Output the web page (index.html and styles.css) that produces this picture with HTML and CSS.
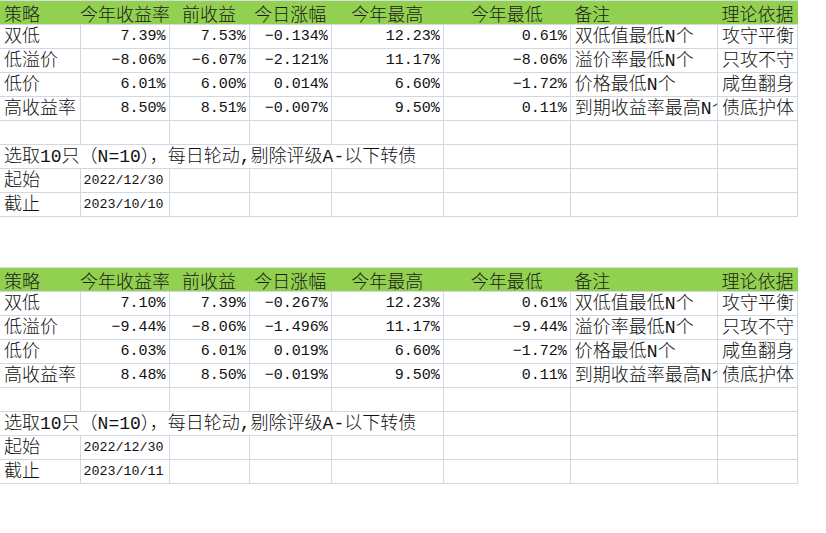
FILE: index.html
```html
<!DOCTYPE html>
<html lang="zh">
<head>
<meta charset="utf-8">
<title>策略</title>
<link rel="stylesheet" href="styles.css">
</head>
<body>
<div class="page">
<table class="sheet">
<colgroup>
<col class="c1"><col class="c2"><col class="c3"><col class="c4"><col class="c5"><col class="c6"><col class="c7"><col class="c8">
</colgroup>
<tr class="head">
<th class="l">策略</th><th>今年收益率</th><th>前收益</th><th>今日涨幅</th><th>今年最高</th><th>今年最低</th><th class="l">备注</th><th class="l">理论依据</th>
</tr>
<tr><td class="txt">双低</td><td class="num">7.39%</td><td class="num">7.53%</td><td class="num">−0.134%</td><td class="num">12.23%</td><td class="num">0.61%</td><td class="txt">双低值最低N个</td><td class="txt">攻守平衡</td></tr>
<tr><td class="txt">低溢价</td><td class="num">−8.06%</td><td class="num">−6.07%</td><td class="num">−2.121%</td><td class="num">11.17%</td><td class="num">−8.06%</td><td class="txt">溢价率最低N个</td><td class="txt">只攻不守</td></tr>
<tr><td class="txt">低价</td><td class="num">6.01%</td><td class="num">6.00%</td><td class="num">0.014%</td><td class="num">6.60%</td><td class="num">−1.72%</td><td class="txt">价格最低N个</td><td class="txt">咸鱼翻身</td></tr>
<tr><td class="txt">高收益率</td><td class="num">8.50%</td><td class="num">8.51%</td><td class="num">−0.007%</td><td class="num">9.50%</td><td class="num">0.11%</td><td class="txt">到期收益率最高N个</td><td class="txt">债底护体</td></tr>
<tr><td></td><td></td><td></td><td></td><td></td><td></td><td></td><td></td></tr>
<tr><td class="txt note" colspan="5">选取10只（N=10），每日轮动,剔除评级A-以下转债</td><td></td><td></td><td></td></tr>
<tr><td class="txt">起始</td><td class="date">2022/12/30</td><td></td><td></td><td></td><td></td><td></td><td></td></tr>
<tr><td class="txt">截止</td><td class="date">2023/10/10</td><td></td><td></td><td></td><td></td><td></td><td></td></tr>
</table>

<table class="sheet second">
<colgroup>
<col class="c1"><col class="c2"><col class="c3"><col class="c4"><col class="c5"><col class="c6"><col class="c7"><col class="c8">
</colgroup>
<tr class="head">
<th class="l">策略</th><th>今年收益率</th><th>前收益</th><th>今日涨幅</th><th>今年最高</th><th>今年最低</th><th class="l">备注</th><th class="l">理论依据</th>
</tr>
<tr><td class="txt">双低</td><td class="num">7.10%</td><td class="num">7.39%</td><td class="num">−0.267%</td><td class="num">12.23%</td><td class="num">0.61%</td><td class="txt">双低值最低N个</td><td class="txt">攻守平衡</td></tr>
<tr><td class="txt">低溢价</td><td class="num">−9.44%</td><td class="num">−8.06%</td><td class="num">−1.496%</td><td class="num">11.17%</td><td class="num">−9.44%</td><td class="txt">溢价率最低N个</td><td class="txt">只攻不守</td></tr>
<tr><td class="txt">低价</td><td class="num">6.03%</td><td class="num">6.01%</td><td class="num">0.019%</td><td class="num">6.60%</td><td class="num">−1.72%</td><td class="txt">价格最低N个</td><td class="txt">咸鱼翻身</td></tr>
<tr><td class="txt">高收益率</td><td class="num">8.48%</td><td class="num">8.50%</td><td class="num">−0.019%</td><td class="num">9.50%</td><td class="num">0.11%</td><td class="txt">到期收益率最高N个</td><td class="txt">债底护体</td></tr>
<tr><td></td><td></td><td></td><td></td><td></td><td></td><td></td><td></td></tr>
<tr><td class="txt note" colspan="5">选取10只（N=10），每日轮动,剔除评级A-以下转债</td><td></td><td></td><td></td></tr>
<tr><td class="txt">起始</td><td class="date">2022/12/30</td><td></td><td></td><td></td><td></td><td></td><td></td></tr>
<tr><td class="txt">截止</td><td class="date">2023/10/11</td><td></td><td></td><td></td><td></td><td></td><td></td></tr>
</table>
</div>
</body>
</html>
```

FILE: styles.css
```css
html, body {
  margin: 0;
  padding: 0;
  background: #ffffff;
}

.page {
  display: flex;
  flex-direction: column;
  gap: 50px;
  padding-top: 0;
}

.sheet {
  border-collapse: collapse;
  table-layout: fixed;
  width: 798px;
  font-family: "Liberation Mono", "Noto Sans CJK SC", monospace;
  font-size: 15px;
  color: #111111;
}

.c1 { width: 80px; }
.c2 { width: 89px; }
.c3 { width: 80px; }
.c4 { width: 82px; }
.c5 { width: 112px; }
.c6 { width: 127px; }
.c7 { width: 147px; }
.c8 { width: 80px; }

.sheet tr {
  height: 24px;
}

.sheet th {
  background: #92d050;
  font-family: "Noto Sans CJK SC", sans-serif;
  font-weight: 300;
  font-size: 18px;
  text-align: center;
  padding: 0;
  border: none;
  border-top: 1px solid #d8dde8;
  border-bottom: 1px solid #d0d7e5;
  white-space: nowrap;
  overflow: hidden;
  line-height: 22px;
  color: #1a1a1a;
}

.sheet th.l {
  text-align: left;
  padding-left: 4px;
}

.sheet td {
  border: 1px solid #d0d7e5;
  padding: 0;
  white-space: nowrap;
  overflow: hidden;
  line-height: 22px;
}

.sheet td:first-child {
  border-left: none;
}

.sheet td.txt {
  font-family: "Liberation Mono", "Noto Sans CJK SC", monospace;
  font-size: 18px;
  font-weight: 300;
  padding-left: 4px;
  text-align: left;
}

.sheet td.note {
  font-size: 18px;
}

.sheet td.num {
  text-align: right;
  padding-right: 3px;
  font-size: 15px;
}

.sheet td.date {
  font-size: 13.33px;
  padding-left: 3px;
}
```
